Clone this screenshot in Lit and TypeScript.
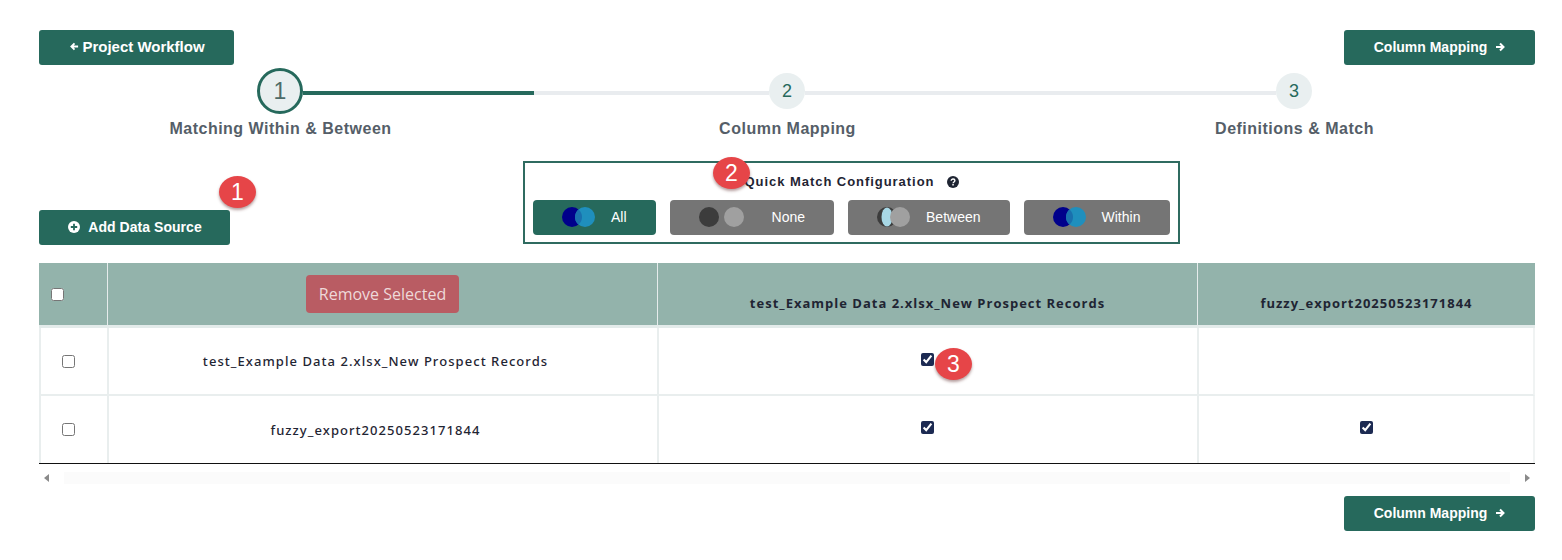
import { LitElement, html, css, svg } from 'lit';
import { customElement } from 'lit/decorators.js';

const arrowLeft = html`<svg viewBox="0 0 10 10" width="9" height="9"><path d="M9 5H2M5 1.5 1.5 5 5 8.5" fill="none" stroke="currentColor" stroke-width="2"/></svg>`;
const arrowRight = html`<svg viewBox="0 0 10 10" width="10" height="10"><path d="M1 5h7M5 1.5 8.5 5 5 8.5" fill="none" stroke="currentColor" stroke-width="2"/></svg>`;
const plusCircle = html`<svg viewBox="0 0 12 12" width="12" height="12"><circle cx="6" cy="6" r="6" fill="#fff"/><path d="M6 2.8v6.4M2.8 6h6.4" stroke="#26695c" stroke-width="1.8"/></svg>`;
const helpCircle = html`<svg viewBox="0 0 12 12" width="12" height="12"><circle cx="6" cy="6" r="6" fill="#1f2533"/><path d="M4.2 4.8c0-1.2.9-1.8 1.9-1.8s1.8.6 1.8 1.6c0 1.3-1.8 1.4-1.8 2.6" fill="none" stroke="#fff" stroke-width="1.4"/><rect x="5.3" y="8" width="1.5" height="1.5" fill="#fff"/></svg>`;

type Venn = { label: string; left: string; right: string; lens?: string; gap: number };

const modes: Venn[] = [
  { label: 'All', left: '#00008b', right: '#1f8fbd', lens: '#1a70ad', gap: 13 },
  { label: 'None', left: '#3c3c3c', right: '#a0a0a0', gap: 25 },
  { label: 'Between', left: '#3c3c3c', right: '#a0a0a0', gap: 13 },
  { label: 'Within', left: '#00008b', right: '#1f8fbd', lens: '#1a70ad', gap: 13 },
];

const vennIcon = (m: Venn) => {
  const mid = 10 + m.gap / 2;
  return html`<svg class="venn" width=${m.gap + 20} height="20" viewBox="0 0 ${m.gap + 20} 20">
    <circle cx="10" cy="10" r="10" fill=${m.left}></circle>
    ${m.label === 'Between' ? svg`<ellipse cx="10" cy="10" rx="5.5" ry="9.5" fill="#a8d8e6"></ellipse>` : ''}
    <circle cx=${10 + m.gap} cy="10" r="10" fill=${m.right}></circle>
    ${m.lens ? svg`<path d="M${mid} 2.4A10 10 0 0 1 ${mid} 17.6A10 10 0 0 1 ${mid} 2.4Z" fill=${m.lens}></path>` : ''}
  </svg>`;
};

const sources = ['test_Example Data 2.xlsx_New Prospect Records', 'fuzzy_export20250523171844'];

@customElement('app-root')
export class AppRoot extends LitElement {
  static styles = css`
    :host {
      display: block;
      padding: 30px 27px 0 39px;
      font-family: 'Liberation Sans', Arial, sans-serif;
      background: #fff;
      position: relative;
      height: 530px;
    }
    .top-row {
      display: flex;
      justify-content: space-between;
    }
    .btn {
      display: inline-flex;
      align-items: center;
      justify-content: center;
      height: 35px;
      box-sizing: border-box;
      background: #26695c;
      color: #fff;
      border-radius: 3px;
      font-weight: 700;
      padding-bottom: 1px;
    }
    .btn.back { width: 195px; gap: 3px; font-size: 15px; padding: 0 0 2px 2px; }
    .btn.next { width: 191px; gap: 8px; font-size: 14px; }
    .btn.add { width: 191px; gap: 8px; font-size: 14px; padding-left: 1px; letter-spacing: 0.05px; }
    .track {
      display: flex;
      align-items: center;
      height: 46px;
      margin: 3px 0 0 218px;
      width: 1055px;
    }
    .step {
      flex: none;
      box-sizing: border-box;
      width: 36px;
      height: 36px;
      border-radius: 50%;
      background: #e9eff0;
      color: #26695c;
      font-size: 18px;
      display: flex;
      align-items: center;
      justify-content: center;
    }
    .step.active {
      width: 46px;
      height: 46px;
      border: 3px solid #26695c;
      font-size: 23px;
      color: #4d6b68;
    }
    .bar { height: 4px; margin-top: 4px; background: #e9ecef; flex: 1; }
    .bar.done { flex: none; width: 231px; background: #26695c; }
    .bar.rest { flex: none; width: 235px; }
    .labels {
      display: grid;
      grid-template-columns: repeat(3, 507px);
      margin: 5px 0 0 -12px;
      width: 1521px;
      text-align: center;
      font-size: 16px;
      font-weight: 700;
      color: #555e68;
      line-height: 20px;
      letter-spacing: 0.5px;
    }
    .tools {
      display: flex;
      align-items: flex-end;
      margin-top: 22px;
      height: 84px;
    }
    .config {
      box-sizing: border-box;
      width: 657px;
      height: 83px;
      margin: 0 0 1px 293px;
      border: 2px solid #2f6b60;
      padding: 0 8px;
    }
    .config-title {
      height: 37px;
      display: flex;
      align-items: center;
      justify-content: center;
      gap: 13px;
      font-size: 13px;
      font-weight: 700;
      color: #1f2533;
      letter-spacing: 0.95px;
      padding-left: 1px;
    }
    .modes { display: flex; gap: 14px; }
    .mode {
      display: flex;
      align-items: center;
      box-sizing: border-box;
      height: 35px;
      padding: 0 29px 1px;
      border-radius: 4px;
      background: #757575;
      color: #fff;
      font-size: 14px;
      gap: 16px;
    }
    .mode:last-child { padding-right: 30px; }
    .mode.on { background: #26695c; }
    .mode.wide { gap: 28px; }
    .venn { flex: none; }
    table {
      border-collapse: separate;
      border-spacing: 0;
      table-layout: fixed;
      width: 1496px;
      margin-top: 18px;
      border-bottom: 1px solid #111;
      font-family: 'Noto Sans', 'Open Sans', sans-serif;
      font-size: 13px;
      color: #1f2533;
      letter-spacing: 1.06px;
    }
    th {
      height: 62px;
      padding: 0;
      background: #93b3ab;
      border-left: 1px solid #e6ecec;
      border-bottom: 3px solid #e3ebea;
      font-weight: 700;
      font-family: 'Open Sans', sans-serif;
      letter-spacing: 1px;
      vertical-align: middle;
    }
    th:first-child {
      border-left: 0;
      text-align: left;
      padding-left: 12px;
    }
    th:first-child input { margin-top: -2px; }
    th .name { display: block; margin-top: 17px; }
    td {
      height: 66px;
      padding: 0;
      text-align: center;
      font-weight: 500;
      border-left: 2px solid #e9eeee;
      border-bottom: 2px solid #e9eeee;
    }
    td:first-child { padding: 0 12px 0 0; }
    td.source { padding-right: 15px; }
    td:last-child { border-right: 2px solid #f0f3f3; }
    tr:last-child td { border-bottom: 0; height: 67px; }
    input {
      width: 13px;
      height: 13px;
      margin: 0;
      accent-color: #1c2a52;
      vertical-align: middle;
    }
    td:first-child input { position: relative; top: -1px; }
    tr:last-child td:first-child input { top: -2px; }
    td.pick input { position: relative; top: -3px; }
    tr:last-child td.pick input { top: -4px; }
    td.mid input { left: -1px; }
    .remove {
      display: inline-flex;
      align-items: center;
      justify-content: center;
      width: 153px;
      height: 38px;
      border-radius: 4px;
      background: #b95c63;
      color: #eed9d9;
      font-size: 16px;
      font-weight: 400;
      letter-spacing: 0;
    }
    .scrollbar {
      display: flex;
      align-items: center;
      height: 12px;
      margin-top: 8px;
      padding: 0 5px;
      gap: 15px;
      width: 1486px;
    }
    .scrollbar i {
      flex: none;
      width: 0;
      height: 0;
      border-top: 4px solid transparent;
      border-bottom: 4px solid transparent;
    }
    .scrollbar .l { border-right: 5px solid #8a8a8a; }
    .scrollbar .r { border-left: 5px solid #8a8a8a; }
    .scrollbar div { flex: 1; height: 12px; background: #fbfbfb; }
    .bottom-row {
      display: flex;
      justify-content: flex-end;
      margin-top: 12px;
    }
    .badge {
      position: absolute;
      width: 37px;
      height: 32px;
      border-radius: 50%;
      background: #e64548;
      color: #fff;
      font-size: 23px;
      display: flex;
      align-items: center;
      justify-content: center;
      box-shadow: 0 2px 3px rgba(90, 40, 40, 0.45);
    }
  `;

  render() {
    return html`
      <div class="top-row">
        <div class="btn back">${arrowLeft}<span>Project Workflow</span></div>
        <div class="btn next"><span>Column Mapping</span>${arrowRight}</div>
      </div>

      <div class="track">
        <div class="step active">1</div>
        <div class="bar done"></div>
        <div class="bar rest"></div>
        <div class="step">2</div>
        <div class="bar"></div>
        <div class="step">3</div>
      </div>
      <div class="labels">
        <div>Matching Within &amp; Between</div>
        <div>Column Mapping</div>
        <div>Definitions &amp; Match</div>
      </div>

      <div class="tools">
        <div class="btn add">${plusCircle}<span>Add Data Source</span></div>
        <div class="config">
          <div class="config-title"><span>Quick Match Configuration</span>${helpCircle}</div>
          <div class="modes">
            ${modes.map(
              (m) => html`<div class="mode ${m.label === 'All' ? 'on' : ''} ${m.label === 'None' ? 'wide' : ''}">
                ${vennIcon(m)}<span>${m.label}</span>
              </div>`
            )}
          </div>
        </div>
      </div>

      <table>
        <colgroup>
          <col style="width:68px" /><col style="width:550px" /><col style="width:540px" /><col style="width:338px" />
        </colgroup>
        <thead>
          <tr>
            <th><input type="checkbox" /></th>
            <th><span class="remove">Remove Selected</span></th>
            ${sources.map((s) => html`<th><span class="name">${s}</span></th>`)}
          </tr>
        </thead>
        <tbody>
          ${sources.map(
            (s, i) => html`<tr>
              <td><input type="checkbox" /></td>
              <td class="source">${s}</td>
              <td class="pick mid"><input type="checkbox" checked /></td>
              <td class="pick">${i === 1 ? html`<input type="checkbox" checked />` : ''}</td>
            </tr>`
          )}
        </tbody>
      </table>
      <div class="scrollbar"><i class="l"></i><div></div><i class="r"></i></div>

      <div class="bottom-row">
        <div class="btn next"><span>Column Mapping</span>${arrowRight}</div>
      </div>

      <div class="badge" style="left:219px;top:176px">1</div>
      <div class="badge" style="left:713px;top:157px">2</div>
      <div class="badge" style="left:935px;top:348px">3</div>
    `;
  }
}
